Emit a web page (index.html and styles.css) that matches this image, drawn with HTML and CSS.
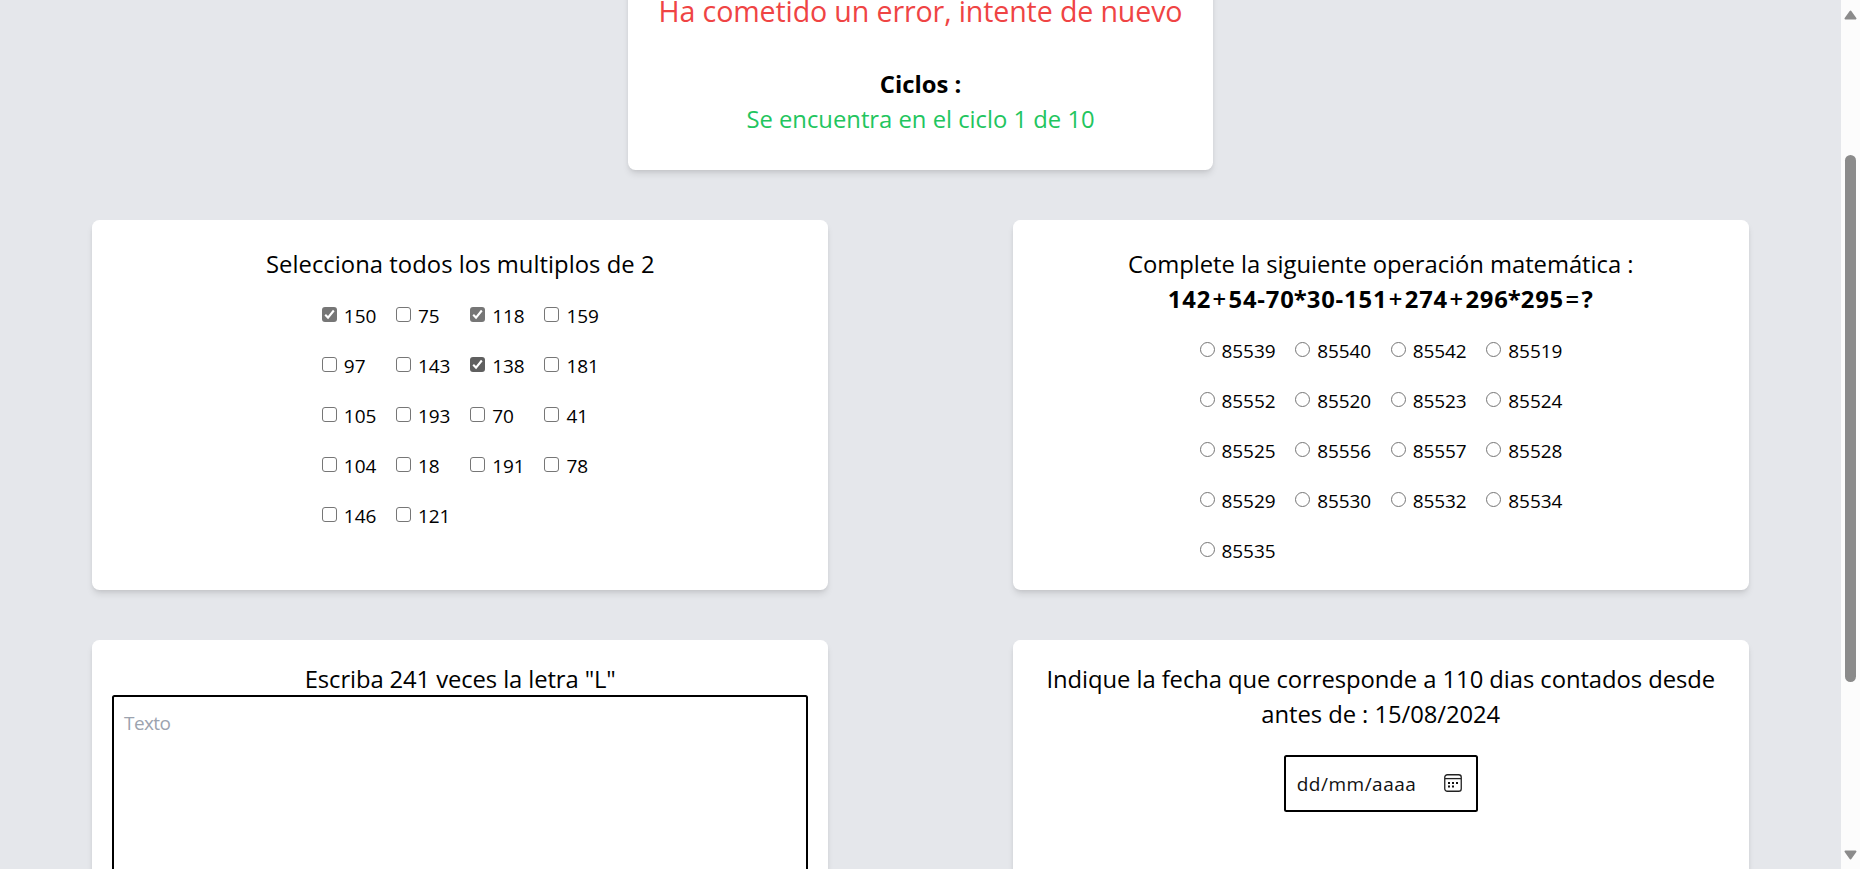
FILE: index.html
```html
<!DOCTYPE html>
<html lang="es">
<head>
<meta charset="utf-8">
<title>Ciclos</title>
<link rel="stylesheet" href="styles.css">
</head>
<body>
<div class="app">
  <main class="page">
    <section class="card status">
      <p class="error">Ha cometido un error, intente de nuevo</p>
      <h2 class="title strong cycles">Ciclos :</h2>
      <p class="title progress">Se encuentra en el ciclo 1 de 10</p>
    </section>
    <div class="board">
      <section class="card question">
        <p class="title select">Selecciona todos los multiplos de 2</p>
        <div class="options checks">
          <label><input type="checkbox" checked>150</label>
          <label><input type="checkbox">75</label>
          <label><input type="checkbox" checked>118</label>
          <label><input type="checkbox">159</label>
          <label><input type="checkbox">97</label>
          <label><input type="checkbox">143</label>
          <label><input type="checkbox" class="hovered" checked>138</label>
          <label><input type="checkbox">181</label>
          <label><input type="checkbox">105</label>
          <label><input type="checkbox">193</label>
          <label><input type="checkbox">70</label>
          <label><input type="checkbox">41</label>
          <label><input type="checkbox">104</label>
          <label><input type="checkbox">18</label>
          <label><input type="checkbox">191</label>
          <label><input type="checkbox">78</label>
          <label><input type="checkbox">146</label>
          <label><input type="checkbox">121</label>
        </div>
      </section>
      <section class="card question">
        <p class="title math">Complete la siguiente operación matemática :</p>
        <p class="title strong formula">142<span class="op">+</span>54-70<span class="times">*</span>30-151<span class="op">+</span>274<span class="op">+</span>296<span class="times">*</span>295<span class="op">=</span>?</p>
        <div class="options radios">
          <label><input type="radio" name="r">85539</label>
          <label><input type="radio" name="r">85540</label>
          <label><input type="radio" name="r">85542</label>
          <label><input type="radio" name="r">85519</label>
          <label><input type="radio" name="r">85552</label>
          <label><input type="radio" name="r">85520</label>
          <label><input type="radio" name="r">85523</label>
          <label><input type="radio" name="r">85524</label>
          <label><input type="radio" name="r">85525</label>
          <label><input type="radio" name="r">85556</label>
          <label><input type="radio" name="r">85557</label>
          <label><input type="radio" name="r">85528</label>
          <label><input type="radio" name="r">85529</label>
          <label><input type="radio" name="r">85530</label>
          <label><input type="radio" name="r">85532</label>
          <label><input type="radio" name="r">85534</label>
          <label><input type="radio" name="r">85535</label>
        </div>
      </section>
      <section class="card entry">
        <p class="title letters">Escriba 241 veces la letra "L"</p>
        <textarea class="text" placeholder="Texto"></textarea>
      </section>
      <section class="card entry">
        <p class="title date-title">Indique la fecha que corresponde a 110 dias contados desde antes de : 15/08/2024</p>
        <div class="date">
          <span>dd/mm/aaaa</span>
          <svg width="18" height="18" viewBox="0 0 18 18" fill="none" stroke="#222" stroke-width="1.3">
            <rect x=".75" y=".75" width="16.5" height="16.5" rx="2.6"/>
            <path d="M1 4.6h16"/>
            <path d="M4 8.9h2M8 8.9h2M12 8.9h2M4 12.6h2M8 12.6h2" stroke="#111" stroke-width="2"/>
          </svg>
        </div>
      </section>
    </div>
  </main>
  <aside class="scrollbar">
    <svg width="13" height="10" viewBox="0 0 13 10"><path d="M6.5 1.5 11.5 8.5h-10z" fill="#8b8b8b" stroke="#8b8b8b" stroke-width="2" stroke-linejoin="round"/></svg>
    <div class="thumb"></div>
    <svg width="13" height="10" viewBox="0 0 13 10"><path d="M6.5 8.5 11.5 1.5h-10z" fill="#8b8b8b" stroke="#8b8b8b" stroke-width="2" stroke-linejoin="round"/></svg>
  </aside>
</div>
</body>
</html>
```
FILE: styles.css
```css
* { box-sizing: border-box; margin: 0; padding: 0; }
body {
  background: #e5e7eb;
  color: #000;
  font-family: "Open Sans", "Noto Sans", sans-serif;
  font-size: 19px;
  line-height: 30px;
  overflow: hidden;
}
.app { display: flex; height: 869px; overflow: hidden; }
.page { flex: 1; display: flex; flex-direction: column; align-items: center; gap: 50px; }
.card {
  background: #fff;
  border-radius: 7.5px;
  box-shadow: 0 5px 7.5px -1.25px rgba(0, 0, 0, .1), 0 2.5px 5px -2.5px rgba(0, 0, 0, .1);
}
.status { width: 585px; height: 220px; margin-top: -50px; padding-top: 41px; text-align: center; flex: none; }
.error { font-size: 28.6px; line-height: 40px; color: #ef4444; margin-bottom: 36px; letter-spacing: -.13px; }
.title { font-size: 23.8px; line-height: 35px; font-weight: 400; text-align: center; }
.strong { font-weight: 700; }
.progress { color: #22c55e; }
.select { letter-spacing: .04px; }
.letters { letter-spacing: -.1px; }
.math { letter-spacing: -.04px; }
.date-title { letter-spacing: -.06px; }
.formula { letter-spacing: .8px; }
.op { font-weight: 600; padding: 0 1.5px; }
.times { margin: 0 -.8px; }
.board {
  width: 100%;
  display: grid;
  grid-template-columns: 736.4px 736.4px;
  grid-template-rows: 370px 370px;
  justify-content: space-around;
  row-gap: 50px;
}
.question { padding-top: 27px; }
.entry { padding: 22px 20px 0; }
.options { display: grid; justify-content: center; gap: 20px; padding-top: 19px; letter-spacing: -.08px; }
.checks { grid-template-columns: repeat(4, 54.2px); }
.radios { grid-template-columns: repeat(4, 75.6px); }
.options label { display: flex; height: 30px; white-space: nowrap; }
.options input {
  appearance: none;
  flex: none;
  width: 15px;
  height: 15px;
  margin: 6px 7px 0 0;
  border: 1.25px solid #767676;
  border-radius: 3px;
  background: #fff;
}
.options input[type="radio"] { border-radius: 50%; }
.options input:checked {
  border: 0;
  background: #767676 url("data:image/svg+xml,%3Csvg xmlns='http://www.w3.org/2000/svg' viewBox='0 0 15 15'%3E%3Cpath d='M3.2 7.8 6 10.6 11.8 3.5' fill='none' stroke='white' stroke-width='2.1'/%3E%3C/svg%3E") center / 15px 15px;
}
.options input.hovered { background-color: #5f5f5f; }
.text {
  display: block;
  width: 100%;
  height: 300px;
  margin-top: -2px;
  padding: 11px 10px;
  border: 2px solid #000;
  border-radius: 2.5px;
  font: inherit;
  letter-spacing: -.6px;
  resize: none;
  outline: 0;
}
.text::placeholder { color: #9ca3af; opacity: 1; }
.date {
  display: flex;
  align-items: center;
  justify-content: space-between;
  width: 194px;
  height: 57px;
  margin: 23px auto 0;
  padding: 0 14px 2px 11px;
  border: 2px solid #000;
  border-radius: 2.5px;
}
.date span { letter-spacing: .5px; padding-top: 2px; color: #111; }
.scrollbar {
  width: 19px;
  background: #fcfcfc;
  display: flex;
  flex-direction: column;
  align-items: center;
  padding: 10px 0 9px;
}
.thumb { width: 11px; height: 527px; margin: 135px 0 auto; border-radius: 6px; background: #8b8b8b; }
```
